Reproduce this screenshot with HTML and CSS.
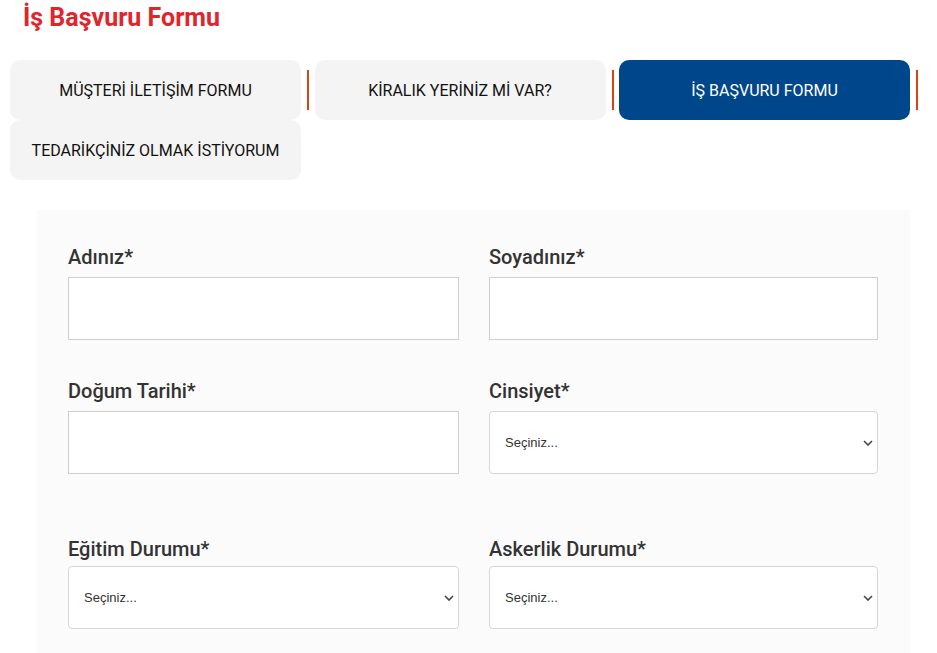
FILE: index.html
```html
<!DOCTYPE html>
<html lang="tr">
  <head>
    <meta charset="UTF-8" />
    <meta name="viewport" content="width=device-width, initial-scale=1.0" />
    <title>İş Başvuru Formu</title>
    <link rel="stylesheet" href="styles.css">
  </head>
  <body>
    <div class="page">
      <h1 class="title">İş Başvuru Formu</h1>

      <div class="tabs">
        <div class="tab-item">
          <a class="tab" href="#">MÜŞTERİ İLETİŞİM FORMU</a>
          <span class="sep"></span>
        </div>
        <div class="tab-item">
          <a class="tab" href="#">KİRALIK YERİNİZ Mİ VAR?</a>
          <span class="sep"></span>
        </div>
        <div class="tab-item">
          <a class="tab active" href="#">İŞ BAŞVURU FORMU</a>
          <span class="sep"></span>
        </div>
        <div class="tab-item">
          <a class="tab" href="#">TEDARİKÇİNİZ OLMAK İSTİYORUM</a>
        </div>
      </div>

      <form class="form">
        <div class="field">
          <label>Adınız*</label>
          <input type="text" />
        </div>
        <div class="field">
          <label>Soyadınız*</label>
          <input type="text" />
        </div>
        <div class="field">
          <label>Doğum Tarihi*</label>
          <input type="text" />
        </div>
        <div class="field">
          <label>Cinsiyet*</label>
          <select>
            <option>Seçiniz...</option>
          </select>
        </div>
        <div class="field field-low">
          <label>Eğitim Durumu*</label>
          <select>
            <option>Seçiniz...</option>
          </select>
        </div>
        <div class="field field-low">
          <label>Askerlik Durumu*</label>
          <select>
            <option>Seçiniz...</option>
          </select>
        </div>
      </form>
    </div>
  </body>
</html>
```

FILE: styles.css
```css
* {
  box-sizing: border-box;
}
body {
  margin: 0;
  background: #fff;
  font-family: Roboto, "Liberation Sans", sans-serif;
  color: #222;
}
.page {
  padding: 0 0 0 10px;
}
.title {
  margin: 0 0 0 13px;
  padding-top: 3px;
  height: 60px;
  font-size: 25px;
  font-weight: 700;
  color: #e0252b;
}
.tabs {
  display: flex;
  flex-wrap: wrap;
  width: 920px;
}
.tab-item {
  display: flex;
  align-items: center;
}
.tab {
  display: flex;
  align-items: center;
  justify-content: center;
  width: 291px;
  height: 60px;
  border-radius: 10px;
  background: #f4f4f4;
  color: #111;
  font-size: 16px;
  text-decoration: none;
}
.tab.active {
  background: #00468b;
  color: #fff;
}
.sep {
  width: 2px;
  height: 40px;
  margin: 0 5.5px 0 6px;
  background: #d9430f;
}
.form {
  display: grid;
  grid-template-columns: 391px 389px;
  column-gap: 30px;
  width: 873px;
  margin: 30px 0 0 27px;
  padding: 35px 32px 30px 31px;
  background: #fbfbfb;
}
.field {
  display: flex;
  flex-direction: column;
  margin-bottom: 39px;
}
.field label {
  font-size: 20px;
  font-weight: 500;
  color: #333;
  margin-bottom: 8px;
}
.field input {
  height: 63px;
  border: 1px solid #cfcfcf;
  background: #fff;
}
.field select {
  height: 63px;
  padding: 0 15px;
  border: 1px solid #d6d6d6;
  border-radius: 4px;
  background: #fff url("data:image/svg+xml;utf8,<svg xmlns='http://www.w3.org/2000/svg' width='10' height='6' viewBox='0 0 10 6'><path d='M1 1l4 4 4-4' fill='none' stroke='%23444' stroke-width='1.6'/></svg>") no-repeat right 4px center;
  font-family: "Liberation Sans", Arial, sans-serif;
  font-size: 13px;
  color: #333;
  appearance: none;
  -webkit-appearance: none;
}
.field-low {
  margin-top: 24px;
}
.field-low label {
  margin-bottom: 5px;
}
```
